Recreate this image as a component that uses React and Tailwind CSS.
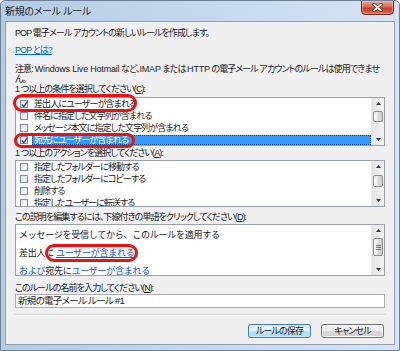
import React from 'react';

const conditions = [
  { text: '差出人にユーザーが含まれる', checked: true },
  { text: '件名に指定した文字列が含まれる' },
  { text: 'メッセージ本文に指定した文字列が含まれる' },
  { text: '宛先にユーザーが含まれる', checked: true, selected: true },
];

const actions = [
  { text: '指定したフォルダーに移動する' },
  { text: '指定したフォルダーにコピーする' },
  { text: '削除する' },
  { text: '指定したユーザーに転送する' },
];

function CheckBox({ checked }) {
  return (
    <span className="w-[8px] h-[8px] shrink-0 border border-[#7b8da6] bg-[linear-gradient(135deg,#dbe0e7,#ffffff)] flex items-center justify-center">
      {checked && (
        <svg width="7" height="7" viewBox="0 0 7 7" className="overflow-visible">
          <path d="M0.8 3.6 L2.7 5.6 L6.4 0.6" fill="none" stroke="#2c4f86" strokeWidth="1.4" />
        </svg>
      )}
    </span>
  );
}

function Arrow({ up }) {
  return (
    <div className="h-[11px] flex items-center justify-center">
      <svg width="5" height="3" viewBox="0 0 5 3">
        <path d={up ? 'M0 3 L2.5 0 L5 3 Z' : 'M0 0 L2.5 3 L5 0 Z'} fill="#3a3a3a" />
      </svg>
    </div>
  );
}

function ScrollBar({ thumb, grip }) {
  return (
    <div className="w-[13px] shrink-0 flex flex-col bg-[linear-gradient(90deg,#e4e4e4,#f3f3f3)] border-l border-[#ebebeb]">
      <Arrow up />
      <div className="flex-1 px-[1px]">
        <div className={`${thumb} rounded-[2px] border border-[#8e8e8e] bg-[linear-gradient(90deg,#f6f6f6,#e9e9e9_50%,#d9d9d9_51%,#cdcdcd)] flex flex-col items-center justify-center gap-[1px]`}>
          {grip && [0, 1, 2].map((i) => <span key={i} className="w-[5px] h-[1px] bg-[#707070]" />)}
        </div>
      </div>
      <Arrow />
    </div>
  );
}

function ListRow({ item }) {
  return (
    <div className="h-[12px] shrink-0 flex items-center pl-[4px] whitespace-nowrap">
      <CheckBox checked={item.checked} />
      <span
        className={
          item.selected
            ? 'ml-[4px] flex-1 h-[10px] flex items-center pl-[2px] bg-[#3399ff] text-white outline-1 outline-dotted outline-[#0f4f94] -outline-offset-1'
            : 'ml-[4px] flex-1 h-[10px] flex items-center pl-[2px]'
        }
      >
        {item.text}
      </span>
    </div>
  );
}

function ListBox({ items, height, thumb }) {
  return (
    <div className={`${height} shrink-0 flex border border-[#9aa2ad] bg-white overflow-hidden`}>
      <div className="flex-1 flex flex-col leading-[10px] overflow-hidden">
        {items.map((item) => (
          <ListRow key={item.text} item={item} />
        ))}
      </div>
      <ScrollBar thumb={thumb} />
    </div>
  );
}

const App = () => {
  return (
    <div className="w-[400px] h-[351px] relative flex flex-col border border-[#6e7f93] rounded-t-[5px] overflow-hidden bg-[linear-gradient(90deg,#b4cbe5_0%,#c3d7ed_45%,#d4e4f5_100%)] font-['Liberation_Sans','Noto_Sans_CJK_JP',sans-serif] [font-feature-settings:'palt'] text-[#1a1a1a]">
      {/* title bar */}
      <div className="h-[20px] shrink-0 flex items-start pl-[4px] pr-[5px]">
        <span className="mt-[5px] text-[10px] leading-[12px] whitespace-nowrap text-[#1e1e1e] tracking-[-0.3px]">新規のメール ルール</span>
        <div className="ml-auto -mt-[1px] w-[33px] h-[15px] rounded-b-[4px] border border-[#6b2418] bg-[linear-gradient(#eaa797,#d9674f_45%,#c8412a_55%,#d7644b)] shadow-[inset_0_0_0_1px_rgba(255,200,190,0.5)] flex items-center justify-center">
          <svg width="11" height="9" viewBox="0 0 11 9">
            <path d="M2 1.5 L9 7.5 M9 1.5 L2 7.5" stroke="#5a2a22" strokeWidth="3.4" strokeLinecap="round" />
            <path d="M2 1.5 L9 7.5 M9 1.5 L2 7.5" stroke="#ffffff" strokeWidth="1.8" strokeLinecap="round" />
          </svg>
        </div>
      </div>

      {/* client area */}
      <div className="mx-[4px] mb-[5px] flex-1 flex flex-col border border-[#8ea0b6] bg-[#f0f0f0] px-[9px] pt-[6px] text-[9px] whitespace-nowrap tracking-[-0.9px]">
        <div className="leading-[11px]">POP 電子メール アカウントの新しいルールを作成します。</div>
        <div className="mt-[6px] leading-[11px]">
          <span className="text-[#0066cc] underline">POP とは?</span>
        </div>
        <div className="mt-[8px] leading-[10px]">
          注意:<span className="ml-[2px] tracking-[-0.2px]">Windows Live Hotmail</span> など、<span className="tracking-[-0.2px]">IMAP</span> または <span className="tracking-[-0.2px]">HTTP</span> の電子メール アカウントのルールは使用できませ
          <br />
          ん。
        </div>
        <div className="leading-[10px]">
          1 つ以上の条件を選択してください(<span className="underline">C</span>):
        </div>
        <div className="mt-[3px]">
          <ListBox items={conditions} height="h-[49px]" thumb="mt-[2px] h-[11px]" />
        </div>

        <div className="mt-[2px] leading-[10px]">
          1 つ以上のアクションを選択してください(<span className="underline">A</span>):
        </div>
        <div className="mt-[2px]">
          <ListBox items={actions} height="h-[47px]" thumb="mt-[3px] h-[12px]" />
        </div>

        <div className="mt-[5px] leading-[10px]">
          この説明を編集するには、下線付きの単語をクリックしてください(<span className="underline">D</span>):
        </div>
        <div className="mt-[2px] h-[52px] shrink-0 flex border border-[#9aa2ad] bg-white overflow-hidden">
          <div className="flex-1 pl-[3px] pt-[1px] leading-[18px] [font-feature-settings:normal] tracking-[-0.25px] text-[#222]">
            <div>メッセージを受信してから、このルールを適用する</div>
            <div>
              差出人に<span className="ml-[2px] text-[#2352d8] underline">ユーザーが含まれる</span>
            </div>
            <div>
              <span className="text-[#2352d8] underline">および</span>宛先に
              <span className="text-[#2352d8] underline">ユーザーが含まれる</span>
            </div>
          </div>
          <ScrollBar thumb="mt-[2px] h-[18px]" grip />
        </div>

        <div className="mt-[7px] leading-[10px]">
          このルールの名前を入力してください(<span className="underline">N</span>):
        </div>
        <div className="mt-[1px] h-[14px] shrink-0 flex items-center border border-[#abadb3] bg-white pl-[2px] text-[9.5px] leading-[12px] tracking-[-0.7px]">
          新規の電子メール ルール #1
        </div>

        <div className="mt-[6px] border-t border-[#d5d5d5] border-b border-b-white" />

        <div className="mt-[8px] flex justify-end gap-[10px] pr-[1px]">
          <button className="w-[63px] h-[14px] rounded-[3px] border border-[#3c7fb1] bg-[linear-gradient(#eaf6fd,#d9f0fc_50%,#bee6fd_50%,#a7d9f5)] shadow-[inset_0_0_0_1px_#cdeafb] text-[9px] leading-[12px] text-[#1a1a1a]">
            ルールの保存
          </button>
          <button className="w-[63px] h-[14px] rounded-[3px] border border-[#707070] bg-[linear-gradient(#f2f2f2,#ebebeb_50%,#dddddd_50%,#cfcfcf)] shadow-[inset_0_0_0_1px_#fbfbfb] text-[9px] leading-[12px] text-[#1a1a1a]">
            キャンセル
          </button>
        </div>
      </div>

      {/* red annotation marks */}
      <div className="absolute left-[12px] top-[93px] w-[124px] h-[18px] rounded-full border-[3px] border-[#f01010]" />
      <div className="absolute left-[13px] top-[132px] w-[121px] h-[15px] rounded-full border-[3px] border-[#f01010]" />
      <div className="absolute left-[44px] top-[243px] w-[93px] h-[18px] rounded-full border-[3px] border-[#f01010]" />
    </div>
  );
};

export default App;
